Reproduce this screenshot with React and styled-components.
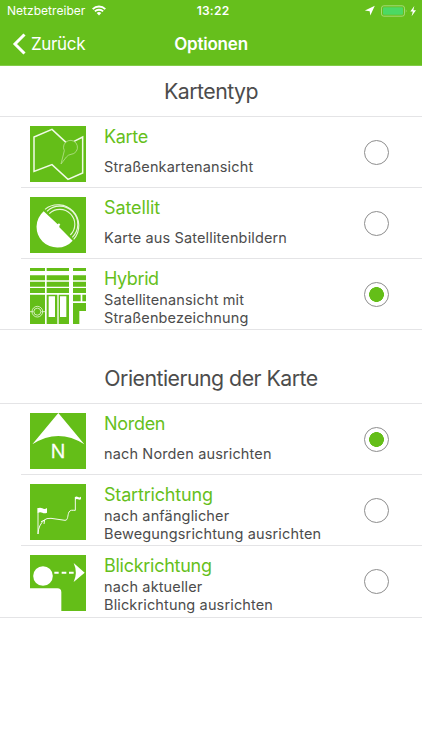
import React, { Component } from 'react';
import styled, { createGlobalStyle } from 'styled-components';

const GREEN = '#66bf1c';
const ICON_GREEN = '#64be18';

const GlobalStyle = createGlobalStyle`
    body {
        margin: 0;
        background: #fff;
        font-family: Inter, 'Liberation Sans', sans-serif;
    }
`;

const Screen = styled.div`
    width: 422px;
    height: 750px;
    overflow: hidden;
    background: #fff;
    color: #4c4c4c;
`;

const Header = styled.header`
    box-sizing: border-box;
    height: 66px;
    background: ${GREEN};
    border-bottom: 1px solid #83cb48;
    color: #fff;
`;

const Bar = styled.div`
    display: grid;
    grid-template-columns: 1fr auto 1fr;
    align-items: center;
`;

const StatusBar = styled(Bar)`
    height: 21px;
    padding: 0 4px 0 7px;
    font-size: 12px;
`;

const NavBar = styled(Bar)`
    height: 45px;
    padding: 0 12px;
    font-size: 17px;
`;

const Carrier = styled.div`
    display: flex;
    align-items: center;
    gap: 7px;
    letter-spacing: 0.03px;
`;

const Clock = styled.div`
    padding-left: 1px;
    font-weight: 600;
    letter-spacing: 0.25px;
`;

const Indicators = styled.div`
    display: flex;
    align-items: center;
    justify-content: flex-end;
`;

const BackButton = styled.button`
    display: flex;
    align-items: center;
    gap: 5px;
    padding: 0;
    border: 0;
    background: none;
    color: inherit;
    font: inherit;
    letter-spacing: -0.35px;
`;

const NavTitle = styled.h1`
    margin: 0;
    font-size: 17px;
    font-weight: 600;
    letter-spacing: -0.2px;
`;

const SectionTitle = styled.h2`
    box-sizing: border-box;
    height: ${props => props.$height}px;
    margin: 0;
    padding-top: ${props => props.$height - 40}px;
    border-bottom: 1px solid #e4e4e6;
    font-size: 21.3px;
    font-weight: 400;
    line-height: 28px;
    letter-spacing: -0.52px;
    text-align: center;
`;

const List = styled.div`
    border-bottom: 1px solid #e4e4e6;
`;

const Row = styled.label`
    display: flex;
    box-sizing: border-box;
    height: 71px;
    margin-left: 21px;
    padding: 9px 33px 0 9px;
    border-bottom: 1px solid #e4e4e6;

    &:last-child {
        height: ${props => props.$lastHeight}px;
        border-bottom: 0;
    }
`;

const Icon = styled.svg`
    flex: none;
    width: 56px;
    height: 56px;
    margin-right: 18px;
`;

const Texts = styled.div`
    flex: 1;
`;

const RowTitle = styled.div`
    height: 23px;
    color: ${GREEN};
    font-size: 18px;
    line-height: 22px;
    letter-spacing: ${props => props.$spacing || 0}px;
`;

const Description = styled.div`
    display: flex;
    align-items: center;
    height: 36px;
    font-size: 14.5px;
    line-height: 18px;
    letter-spacing: 0.14px;
    white-space: pre-line;
`;

const Radio = styled.input`
    flex: none;
    appearance: none;
    box-sizing: border-box;
    width: 25px;
    height: 25px;
    margin: 14px 0 0;
    border: 1px solid #8e8e8e;
    border-radius: 50%;

    &:checked {
        background: radial-gradient(circle, ${ICON_GREEN} 7.1px, transparent 7.700px);
    }
`;

const MapIcon = () => (
    <Icon viewBox='0 0 168 168'>
        <path fill={ICON_GREEN} d='M0 0h168v168H0z' />
        <path fill='none' stroke='#f1fbe6' strokeWidth='4.500' d='M108 49L66 10 12 33v103l54-20 48 44 44-19V33l-26 13' />
        <path fill='none' stroke='#b4e08b' strokeWidth='2.500' d='M93 114l10-40a21 21 0 1 1 20 11q-8 1-14 8z' />
    </Icon>
);

const DishIcon = () => (
    <Icon viewBox='0 0 168 168'>
        <path fill={ICON_GREEN} d='M0 0h168v168H0z' />
        <path fill='#fff' d='M41 43a62 62 0 1 0 87 88L88 91v-5l3-3-4-4-4 3z' />
        <g fill='none' stroke='#e9f7dc' strokeWidth='3.400'>
            <path d='M45 37A62.500 62.500 0 0 1 131 127' />
            <path d='M51 43A53.500 53.500 0 0 1 127 121' />
            <path d='M58 50A43 43 0 0 1 121 114' />
        </g>
    </Icon>
);

const StreetIcon = () => (
    <Icon viewBox='0 0 168 168'>
        <g fill={ICON_GREEN}>
            <path d='M0 0h45v9H0zM50 0h67v9H50zM129 0h39v9h-39z' />
            <path d='M0 22h45v15H0zM50 22h67v15H50zM129 22h39v15h-39z' />
            <path d='M0 41h45v15H0zM50 41h67v15H50zM129 41h39v15h-39z' />
            <path d='M0 60h45v15H0zM50 60h67v15H50zM129 60h39v15h-39z' />
            <path d='M0 80h45v88H0zM50 80h32v88H50zM86 80h31v88H86z' />
            <path d='M129 80h23v20h-23zM157 80h11v20h-11zM129 105h39v24h-20v39h-19z' />
        </g>
        <path fill='#fff' d='M56 85h19v62H56zM90 85h19v62H90z' />
        <g fill='none' stroke='#e4f5d5' strokeWidth='2.500'>
            <path d='M0 131h10M34 131h12' />
            <circle cx='22' cy='131' r='16' />
            <circle cx='22' cy='131' r='10.500' />
        </g>
    </Icon>
);

const NorthLetter = styled.text`
    fill: #fff;
    stroke: #fff;
    stroke-width: 1px;
    font-family: 'Open Sans', 'Liberation Sans', sans-serif;
    font-size: 60px;
    text-anchor: middle;
`;

const NorthIcon = () => (
    <Icon viewBox='0 0 168 168'>
        <path fill={ICON_GREEN} d='M0 0h168v168H0z' />
        <path fill='#fff' d='M85 0l78 94Q85 44 7 94z' />
        <NorthLetter x='84' y='134'>N</NorthLetter>
    </Icon>
);

const RouteIcon = () => (
    <Icon viewBox='0 0 168 168'>
        <path fill={ICON_GREEN} d='M0 0h168v168H0z' />
        <path fill='#fff' d='M23 73q7-4 14 0t14-1v14q-7 3-14 0t-14 1zM135 39q5-3 9 0t9-1v8q-5 2-9 0t-9 1z' />
        <g fill='none' stroke='#fff' strokeWidth='2.800'>
            <path d='M24 72v78M136 39v40' />
            <path d='M24 150q1-27 19-42 6-6 20-5l42 6c10 0 7-15 12-25 4-7 10-5 19-5' />
            <path d='M33 113l11-5-2 12' />
        </g>
    </Icon>
);

const ViewIcon = () => (
    <Icon viewBox='0 0 168 168'>
        <path fill={ICON_GREEN} d='M0 0h168v168H94v-56q0-12-12-12H0z' />
        <circle fill='#fff' cx='39' cy='63' r='29.500' />
        <path fill='none' stroke='#fff' strokeWidth='6' d='M73 53h13M95 53h14M117 53h14' />
        <path fill='#fff' d='M131 24l33 29-33 28q13-28 0-57z' />
    </Icon>
);

const WifiIcon = () => (
    <svg width='14' height='11' viewBox='0 0 14 11'>
        <g fill='none' stroke='#fff' strokeWidth='1.900'>
            <path d='M.7 4.100a9 9 0 0 1 12.600 0' />
            <path d='M2.900 6.400a5.900 5.900 0 0 1 8.200 0' />
        </g>
        <path fill='#fff' d='M4.700 8.100a3.300 3.300 0 0 1 4.600 0L7 10.400z' />
    </svg>
);

const BatteryIcons = () => (
    <svg width='54' height='12' viewBox='0 0 54 12'>
        <path fill='#fff' d='M10.800.8L6.300 10.600 5.700 6.200.9 5.600z' />
        <rect x='17.500' y='.8' width='23' height='10.400' rx='2.300' fill='none' stroke='#a5da78' />
        <rect x='19' y='2.300' width='20' height='7.400' rx='1' fill='#4cd964' />
        <path fill='#a5da78' d='M41.800 4.200q1.500 1.800 0 3.600z' />
        <path fill='#fff' d='M50.300.9l-4 5.500h2.500l-1.200 4.800 4.400-6h-2.600z' />
    </svg>
);

const sections = [
    {
        name: 'type',
        title: 'Kartentyp',
        height: 51,
        lastHeight: 70,
        options: [
            { title: 'Karte', spacing: -0.3, text: 'Straßenkartenansicht', icon: MapIcon },
            { title: 'Satellit', spacing: -0.1, text: 'Karte aus Satellitenbildern', icon: DishIcon },
            { title: 'Hybrid', spacing: -0.4, text: 'Satellitenansicht mit\nStraßenbezeichnung', icon: StreetIcon },
        ],
    },
    {
        name: 'orientation',
        title: 'Orientierung der Karte',
        height: 74,
        lastHeight: 71,
        options: [
            { title: 'Norden', spacing: -0.3, text: 'nach Norden ausrichten', icon: NorthIcon },
            { title: 'Startrichtung', spacing: -0.18, text: 'nach anfänglicher\nBewegungsrichtung ausrichten', icon: RouteIcon },
            { title: 'Blickrichtung', spacing: -0.27, text: 'nach aktueller\nBlickrichtung ausrichten', icon: ViewIcon },
        ],
    },
];

export default class App extends Component {
    constructor(props) {
        super(props);

        this.state = {
            type: 'Hybrid',
            orientation: 'Norden',
        };

        this.handleChange = this.handleChange.bind(this);
    }

    handleChange(event) {
        const target = event.target;

        this.setState({
            [target.name]: target.value
        });
    }

    renderOption(section, option) {
        const OptionIcon = option.icon;

        return (
            <Row key={option.title} $lastHeight={section.lastHeight}>
                <OptionIcon />
                <Texts>
                    <RowTitle $spacing={option.spacing}>{option.title}</RowTitle>
                    <Description>{option.text}</Description>
                </Texts>
                <Radio
                    type='radio'
                    name={section.name}
                    value={option.title}
                    checked={this.state[section.name] === option.title}
                    onChange={this.handleChange}
                />
            </Row>
        );
    }

    render() {
        return (
            <Screen>
                <GlobalStyle />
                <Header>
                    <StatusBar>
                        <Carrier>Netzbetreiber<WifiIcon /></Carrier>
                        <Clock>13:22</Clock>
                        <Indicators><BatteryIcons /></Indicators>
                    </StatusBar>
                    <NavBar>
                        <BackButton>
                            <svg width='14' height='22' viewBox='0 0 14 22'>
                                <path fill='none' stroke='#fff' strokeWidth='3' d='M12.500 1.500L3 11l9.500 9.500' />
                            </svg>
                            Zurück
                        </BackButton>
                        <NavTitle>Optionen</NavTitle>
                    </NavBar>
                </Header>
                {sections.map(section => (
                    <section key={section.name}>
                        <SectionTitle $height={section.height}>{section.title}</SectionTitle>
                        <List>
                            {section.options.map(option => this.renderOption(section, option))}
                        </List>
                    </section>
                ))}
            </Screen>
        );
    }
}
